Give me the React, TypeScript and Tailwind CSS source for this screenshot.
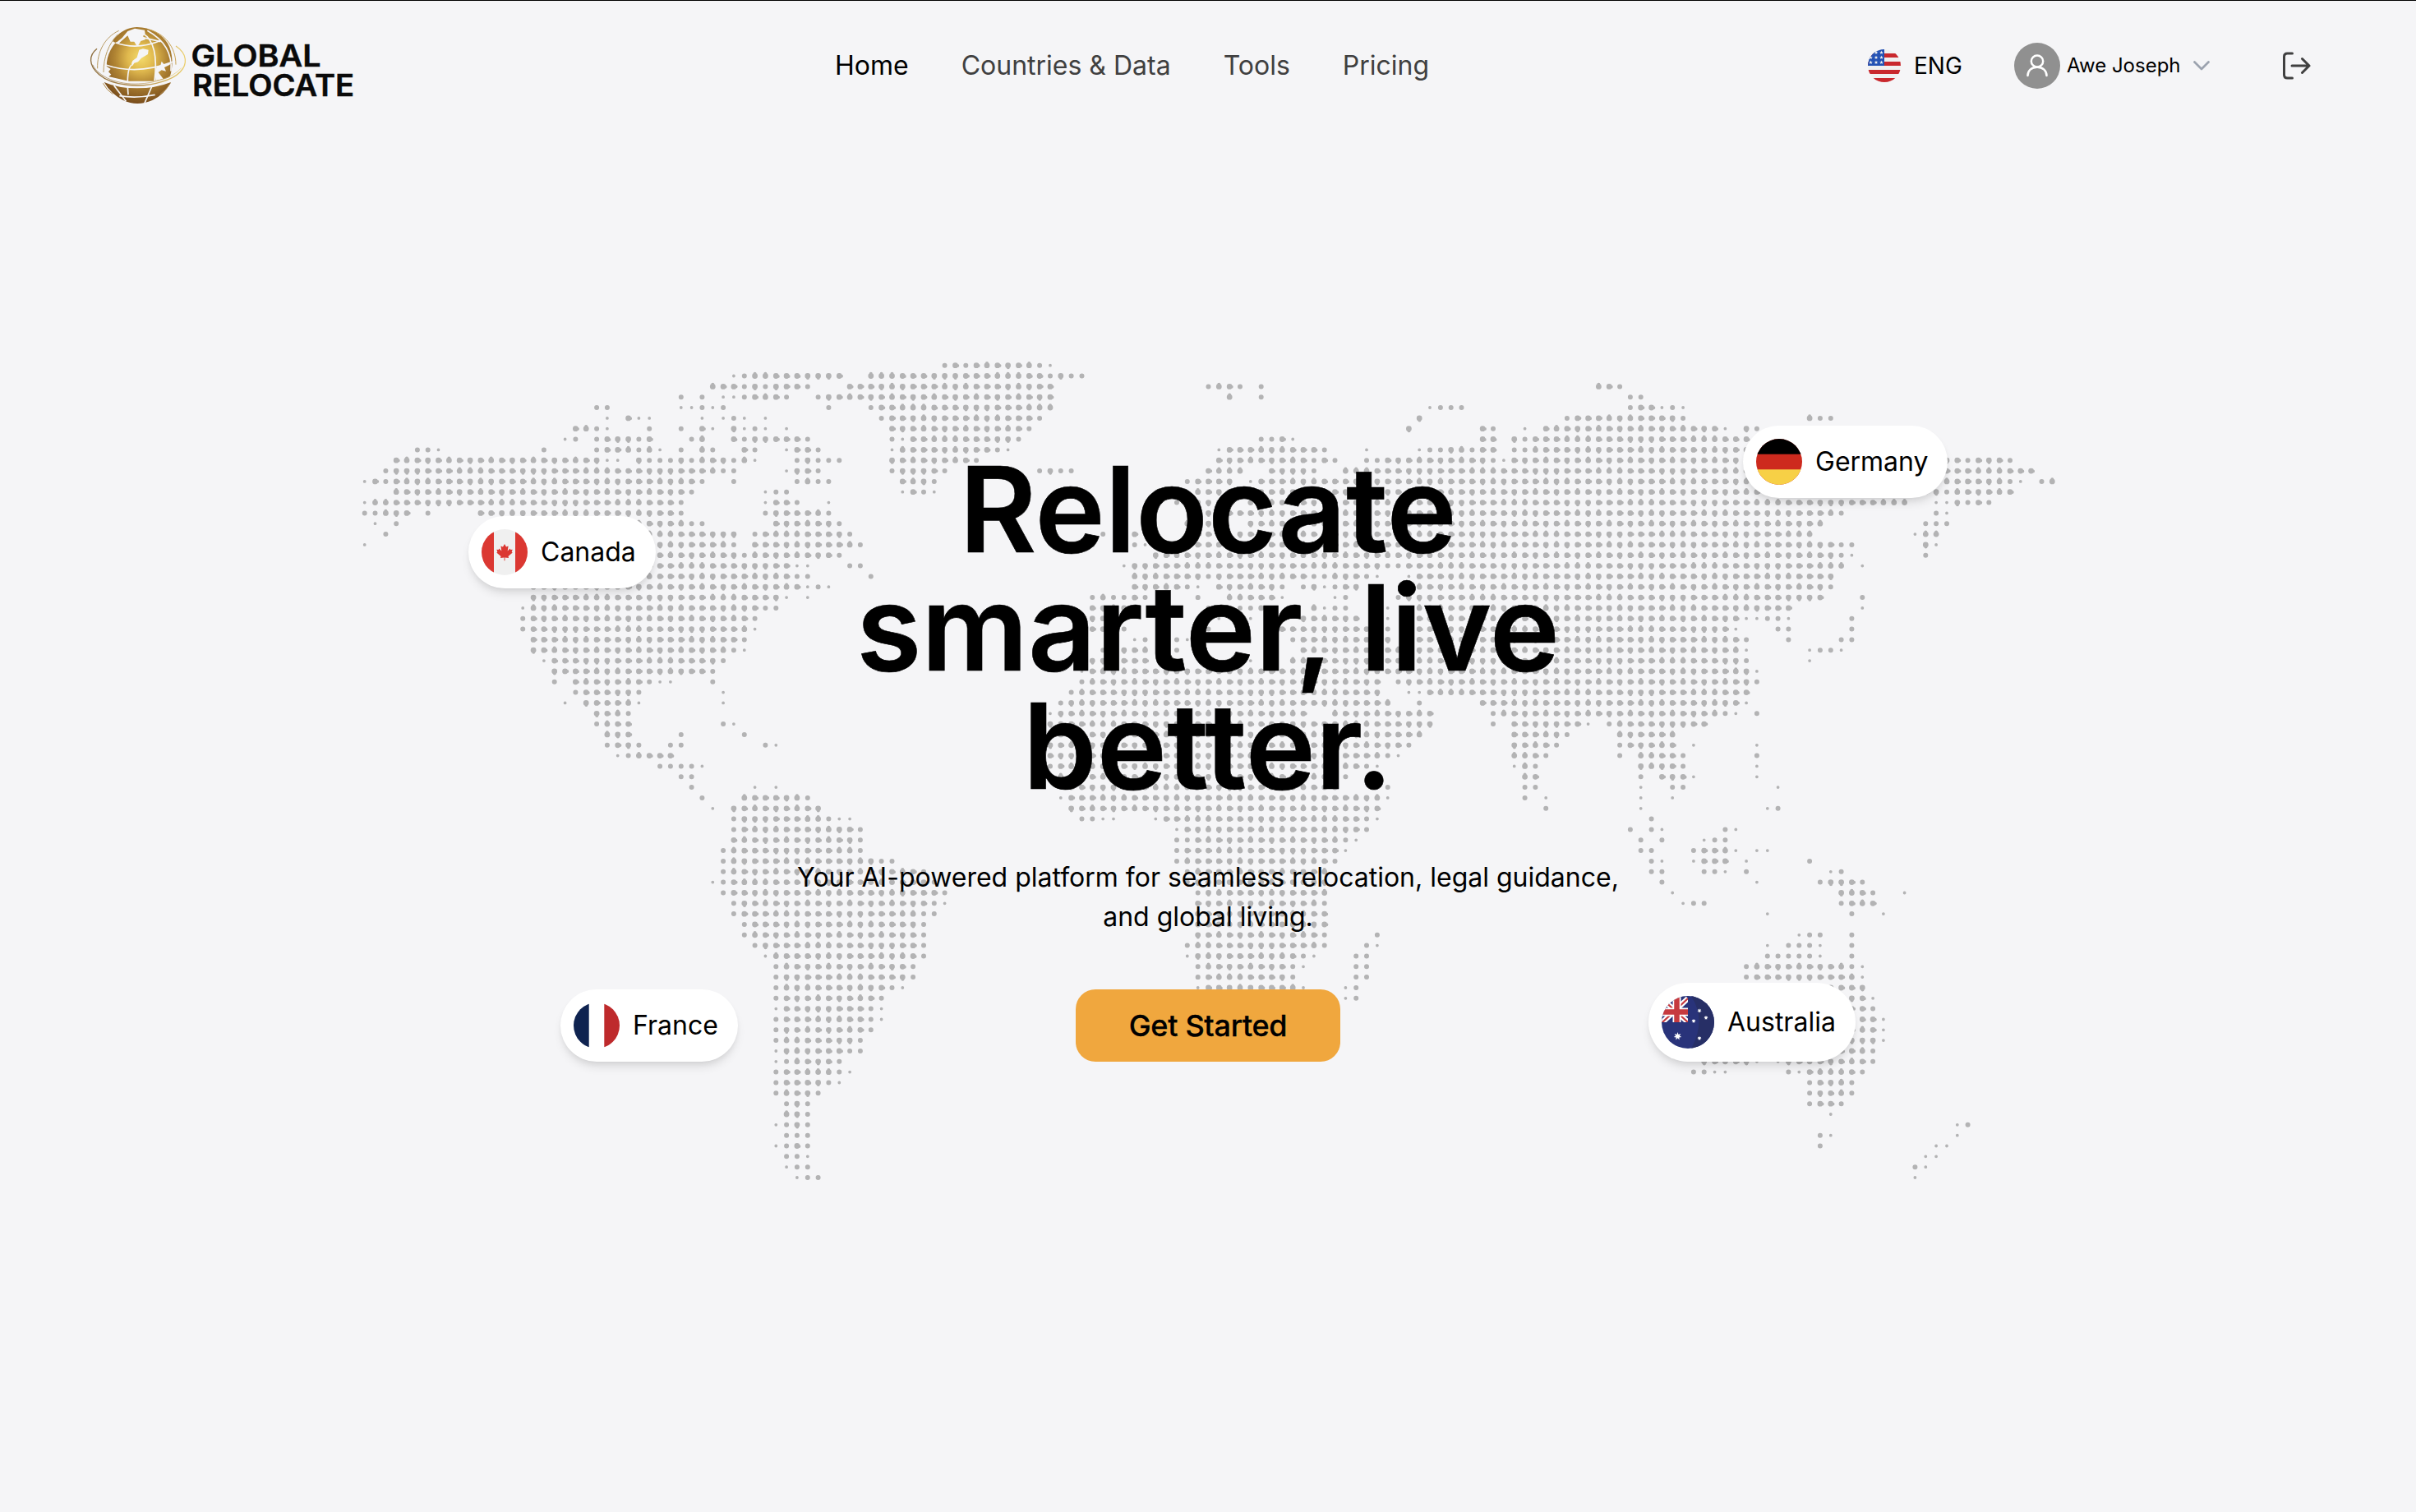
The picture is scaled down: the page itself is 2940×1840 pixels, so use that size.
import React from "react";

const PITCH = 12.835;

/*
 * One string per row of the dotted world map. Tokens are column numbers or
 * column ranges; the suffix "s" marks a small dot and "t" a tiny one.
 */
const ROWS: string[] = [
  "55s 56 57s 58-63 64s 65t",
  "35t 36s 37-45 48-64 65s 66 67s 68s",
  "33-35 36s 37 38s 39-41 42s 46-65 80s 81 82 83s 85s 117 118 119s",
  "30s 32s 34t 35t 36s 37-39 40s 43s 44-65 82 85s 120s 121s",
  "22s 23s 30t 31t 32s 33t 34s 44s 48s 49-65 101t 102s 103s 104s 120s 121 122 123t 124s 125t",
  "23t 25 26t 27t 32t 34t 35s 36t 38t 49s 50-63 64s 100 114s 115-124 125s 137 138s 139s",
  "20 21 22s 23t 27s 30s 32 33t 35 36t 37s 38t 40t 50-62 63s 99 106 107s 110t 112-128 129t 131 132s",
  "19t 20s 22s 23-25 26s 27 31s 32 35 36s 37-41 42s 50s 51t 52-61 62s 85s 86s 87 88t 106 107 109 110s 111-131",
  "5s 6s 7t 17s 22s 23-25 26s 27 28t 30s 32 33s 36 37s 40t 41 42 43s 50t 51-59 60s 61t 81t 82-90 91s 95t 100t 101s 102s 103 104 105s 106 107 109s 110s 111-131",
  "3-22 23t 24t 26 27s 28s 29s 30 31s 32-34 35s 36 37t 41s 42 43s 44s 45s 50-57 58s 81-89 90s 91 92s 95s 96s 97-106 107s 108t 109-131 150 151 152s 153-155 156s",
  "2s 3-33 34s 35s 40t 41 42 43s 50s 51-54 55s 64s 65 66s 67s 80-83 86-89 90s 93-131 150-158",
  "0t 1 2s 3-31 32s 35s 41s 42 43s 44s 51-53 54s 78s 79-82 84t 85-131 150-155 156s 157t 159s 160",
  "3-30 31s 38t 39s 40s 51t 52 53s 54t 79-82 84-149 150s 151-156",
  "0t 1-29 30s 38t 39 40 41s 44t 77s 79-82 84-146 149t 150t 151 152s 153 154s",
  "0s 1s 2-4 6s 11-29 30s 38s 39-43 44s 80-139 140s 149s 150t",
  "1t 3s 12-30 31s 32s 39-44 45s 78-80 84-138 148s 149s 150s",
  "2s 12-35 37s 38-45 46s 70s 73 79-80 83-137 147t 148 149",
  "0t 13-34 35s 37-46 47s 69s 73s 74t 79-139 140s 141s 148 149t",
  "14-35 36s 37-44 45s 75-139 140s 141t 148s",
  "14-40 41t 42t 46s 47s 72t 73-96 97s 98s 99-140 142t",
  "15-40 41s 42s 48s 73-79 80s 81-89 90s 91s 92-94 95s 96t 99t 100-139",
  "16-41 42t 43s 44t 73-77 78s 79t 81-86 87s 89s 90 91t 92s 93-94 100-138 139s",
  "16-39 40t 42t 69s 70 71s 72s 73 74s 79s 82-86 87t 92t 93s 98s 99-138 142s",
  "15t 16-37 38s 39s 69-73 80s 83s 84s 85 90 91t 92s 93s 97t 100-135 142t",
  "15s 16-36 37s 69-72 81t 84t 89 90-94 97t 100-130 131t 132t 133s 134s 135t 141s",
  "15s 16-36 37t 69 70-71 72s 80s 87-95 97s 100-129 130t 134s 135s 141s",
  "16-35 36s 73t 74s 77s 78t 88s 89-96 97 99-130 131s 135s 140s 141s",
  "16-34 35s 36t 70s 71-74 77s 89-96 97-130 131t 137t 138s 139s 140t",
  "17t 18-33 34s 69-74 84t 88-130 131s 137t",
  "18-32 33s 68t 69-131 132t",
  "18s 20-26 27s 28t 29t 33s 68s 69-96 98s 99-131 132s",
  "20s 21-25 26s 34t 67s 68-96 99t 100t 101-131",
  "19t 21-25 26t 34t 66s 67-97 100s 106-130 131t",
  "22-24 25s 65t 66-89 92-101 107s 108-128 129s 130t 132s",
  "22s 23-25 34s 35t 65-90 91-101 107s 109-115 116t 118s 119-127",
  "23-25 30s 36s 65-92 93-100 109-113 114s 119-124",
  "23s 24-25 26s 29s 30s 38s 39t 65-92 93-98 99s 109-112 113s 119s 120-124 126t 132t",
  "24t 25s 26-29 65-96 97s 98t 109-111 112s 119s 121-124 125s 132s",
  "28s 29s 30s 31s 32t 65s 66-94 95s 96t 109t 110 111s 121-124 125s 132t",
  "30s 31s 66-92 93s 110 111 121s 123-125 126t 132t",
  "31s 37t 39t 67-92 97s 110s 111s 121t 124s 125s 134t",
  "32s 36-41 42s 66t 67-96 97t 110s 112t 121t 124t",
  "33t 35-43 67-95 96 112s 121t 133t 134s",
  "35s 36-43 44s 45t 46t 68s 69s 70t 71t 75t 76-94 95s 96t 122s",
  "35s 36-46 47s 77t 78-94 95s 120s 122s 123t 129s 130t",
  "35-46 47s 77s 78s 79-92 93s 94t 121s 123s 127t 128s 129s",
  "34s 35-46 47s 77s 78-92 93t 121s 122s 126s 127-129 130t 132t 133t",
  "34s 35-48 49s 50s 77s 78-91 92s 122s 123t 126t 127-129 131t 137s",
  "34s 35-52 53s 78s 79-91 122s 123s 127s 128s 129t 131s 139t 140s",
  "33t 34s 35-53 54s 78s 79-91 123s 132t 138s 139-141 142s",
  "34s 35-54 55s 79s 80-91 124t 140-142 143s 146t",
  "35s 36-53 54s 55t 79-90 91s 125t 126s 127s 140s 141-143",
  "35s 36-52 53s 54s 79-91 133t 141s 144t",
  "36s 37-52 53s 79-91",
  "36s 37-52 53s 79-90 91s 96s 136t 137s 138s 141s",
  "37s 38-52 53s 78s 79-90 91s 95s 96t 133t 135s 136s 137s 138t 141s",
  "38t 39-52 53s 78t 79-88 89s 90t 94s 95s 133s 134s 135s 136s 137s 138t 141s",
  "39s 40-51 52s 79s 80-87 88s 89t 94s 95s 131s 132-140 141s 142t",
  "39s 40-51 52s 79s 80-87 88s 94s 95s 131s 132-141 142t",
  "39s 40-49 50s 51t 79t 80-88 89t 93t 94s 131-142",
  "39s 40-48 49s 81-87 93t 94s 130-142 143t",
  "39t 40-47 48s 49t 129-142 143s",
  "39s 40-47 48s 49t 129-143 144t",
  "39s 40-47 48s 128-143 144t",
  "39s 40-46 47s 128-143 144t",
  "39t 40-45 46s 47s 128-142 143s",
  "39t 40s 41-44 45s 127-131 132t 134t 135-142 143s",
  "39s 40-44 45s 46t 126s 127s 128t 129t 135s 136t 137-141 142s",
  "39s 40-43 44s 45t 137s 138-140 141s",
  "39s 40-42 43s 137s 138-140 141s",
  "40s 41 42s 137s 138-139 140s",
  "40 41 42s 139t",
  "39t 40s 41 42s 151t 152s",
  "40s 41s 42s 138s 139t 151t",
  "39t 40s 41 42s 138s 149t 150t",
  "40s 41s 42t 148t 149t",
  "40t 41s 42s 147s 148t",
  "41t 42s 43s 147t",
];

const circle = (cx: number, cy: number, r: number) =>
  `M${(cx - r).toFixed(1)} ${cy.toFixed(1)}a${r} ${r} 0 1 0 ${2 * r} 0a${r} ${r} 0 1 0 ${-2 * r} 0`;

const TAILS = [
  [2.7, 0.2],
  [0, -2.7],
  [2.5, 0.4],
  [0.2, 2.6],
];

function mapPath() {
  let d = "";
  ROWS.forEach((row, r) => {
    row.split(" ").forEach((token) => {
      const kind = token.slice(-1);
      const range = token.replace(/[st]/, "").split("-").map(Number);
      const end = range[1] ?? range[0];
      for (let c = range[0]; c <= end; c++) {
        const x = 7.7 + c * PITCH;
        const y = 7.7 + r * PITCH;
        if (kind === "t") {
          d += circle(x, y, 1.9);
        } else if (kind === "s") {
          d += circle(x, y, 3);
        } else {
          const tail = TAILS[(c * 7 + r * 5 + ((c * r) % 3)) % 4];
          d += circle(x, y, 3.4) + circle(x + tail[0], y + tail[1], 2);
        }
      }
    });
  });
  return d;
}

const MAP_D = mapPath();

function WorldMap() {
  return (
    <svg width="2072" height="1006" viewBox="0 0 2072 1006" className="shrink-0 blur-[0.6px]" aria-hidden>
      <path d={MAP_D} fill="#b3b3b4" />
    </svg>
  );
}

function Logo() {
  return (
    <svg width="340" height="120" viewBox="0 0 340 120" role="img" aria-label="Global Relocate">
      <defs>
        <radialGradient id="gold" gradientUnits="userSpaceOnUse" cx="215" cy="150" r="175">
          <stop offset="0" stopColor="#f4dc6c" />
          <stop offset="0.28" stopColor="#e0b94e" />
          <stop offset="0.55" stopColor="#b08433" />
          <stop offset="1" stopColor="#74481a" />
        </radialGradient>
        <linearGradient id="ring" x1="0" x2="1" y1="0" y2="0">
          <stop offset="0" stopColor="#8a6a3a" />
          <stop offset="0.5" stopColor="#b08a4a" />
          <stop offset="1" stopColor="#ecd070" />
        </linearGradient>
      </defs>
      <g transform="scale(0.33333)" fill="none">
        <path d="M128 70C150 48 175 40 200 39C250 39 292 66 312 98C332 130 334 190 318 225L262 236L170 236L92 218C84 170 92 130 122 96C106 92 112 84 128 70Z" fill="url(#gold)" />
        <path d="M80 240Q130 262 200 262Q270 262 324 240Q300 286 256 306Q200 330 150 306Q104 282 80 240Z" fill="url(#gold)" />
        <g fill="#f5f5f7">
          <path d="M166 54L192 44L228 50L230 64L222 72L232 84L214 90L206 104L198 106L190 92L176 92L166 70L150 84L134 98L124 96L146 78Z" />
          <path d="M208 122L222 118L242 122L240 138L216 152L204 166L190 170L184 180L180 172L184 162L200 150Z" />
          <path d="M86 180L104 192L96 202L106 212L94 222L84 214Z" />
          <path d="M272 182L286 178L290 164L300 176L322 168L320 176L300 186L306 200L290 196L278 204L296 228L268 234L266 206Z" />
        </g>
        <g stroke="#f5f5f7" strokeWidth="5">
          <path d="M122 96Q200 124 288 88" />
          <path d="M84 176Q200 216 330 166" />
          <path d="M182 176Q160 190 168 286" />
          <path d="M222 62C262 86 276 140 264 236" />
          <path d="M238 52C296 84 330 130 324 200" />
          <path d="M200 72L286 92" />
          <path d="M136 290Q200 300 266 286" />
          <path d="M256 252L228 316" />
          <path d="M116 252L160 310" />
        </g>
        <path d="M56 190C54 130 82 76 134 52M78 204C78 150 96 100 130 66" stroke="#b79a62" strokeWidth="3" />
        <path d="M246 48C300 64 342 110 342 176" stroke="#c9a252" strokeWidth="3" />
        <path d="M54 118C24 142 22 178 62 212C108 252 210 264 292 238C352 220 380 188 376 156C374 136 360 120 342 108" stroke="#f5f5f7" strokeWidth="13" />
        <path d="M54 118C24 142 22 178 62 212C108 252 210 264 292 238C352 220 380 188 376 156C374 136 360 120 342 108" stroke="url(#ring)" strokeWidth="4" />
        <path d="M38 176C60 222 132 250 206 246C260 244 330 226 362 188" stroke="url(#ring)" strokeWidth="2" />
        <path d="M76 244Q88 268 112 284M322 244Q306 270 284 284" stroke="#b08a4a" strokeWidth="3" />
      </g>
      <g fontFamily="Inter, sans-serif" fontWeight="600" fontSize="37" fill="#0a0a0a" stroke="#0a0a0a" strokeWidth="0.5">
        <text x="132.5" y="61.3" textLength="158" lengthAdjust="spacingAndGlyphs">GLOBAL</text>
        <text x="134" y="96.900" textLength="197" lengthAdjust="spacingAndGlyphs">RELOCATE</text>
      </g>
    </svg>
  );
}

const STAR = "M0 -1L.24 -.32L.95 -.31L.38 .12L.59 .81L0 .4L-.59 .81L-.38 .12L-.95 -.31L-.24 -.32Z";

function UsFlag() {
  const stars = [
    [10, 5], [16.5, 5], [3.5, 11], [10, 11], [16.5, 11], [3.5, 17], [10, 17], [16.5, 17],
  ];
  return (
    <svg width="40" height="40" viewBox="0 0 40 40">
      <clipPath id="us"><circle cx="20" cy="20" r="20" /></clipPath>
      <g clipPath="url(#us)">
        <rect width="40" height="40" fill="#f0f0f0" />
        <path d="M0 5h40v5H0zM0 15h40v5H0zM0 25h40v5H0zM0 35h40v5H0z" fill="#c9282d" />
        <rect width="20" height="20" fill="#2452b4" />
        {stars.map(([x, y], i) => (
          <path key={i} d={STAR} transform={`translate(${x} ${y - 1}) scale(2.5)`} fill="#f0f0f0" />
        ))}
      </g>
    </svg>
  );
}

function CanadaFlag() {
  return (
    <svg width="56" height="56" viewBox="0 0 56 56">
      <clipPath id="ca"><circle cx="28" cy="28" r="28" /></clipPath>
      <g clipPath="url(#ca)">
        <rect width="56" height="56" fill="#f0f0f0" />
        <path d="M0 0h15v56H0zM41 0h15v56H41z" fill="#db3832" />
        <path d="M28 18l2 3.6 2.6-1.2-.9 6 3-3 .6 1.7 2.4-.4-1 3 1 .9-5.2 4.4.5 2-4.6-.6.1 3.8h-1l.1-3.8-4.6.6.5-2-5.2-4.4 1-.9-1-3 2.4.4.6-1.7 3 3-.9-6 2.6 1.2z" fill="#db3832" />
      </g>
    </svg>
  );
}

function GermanyFlag() {
  return (
    <svg width="56" height="56" viewBox="0 0 56 56">
      <clipPath id="de"><circle cx="28" cy="28" r="28" /></clipPath>
      <g clipPath="url(#de)">
        <rect width="56" height="56" fill="#cd2a1e" />
        <rect width="56" height="18.7" fill="#000" />
        <rect y="37.3" width="56" height="18.7" fill="#f7d046" />
      </g>
    </svg>
  );
}

function FranceFlag() {
  return (
    <svg width="56" height="56" viewBox="0 0 56 56">
      <clipPath id="fr"><circle cx="28" cy="28" r="28" /></clipPath>
      <g clipPath="url(#fr)">
        <rect width="56" height="56" fill="#fff" />
        <rect width="18.7" height="56" fill="#0f2350" />
        <rect x="37.3" width="18.7" height="56" fill="#be2a2c" />
      </g>
    </svg>
  );
}

const STAR7 =
  "M0 -1L.2 -.42L.78 -.62L.46 -.1L.97 .22L.37 .3L.43 .9L0 .47L-.43 .9L-.37 .3L-.97 .22L-.46 -.1L-.78 -.62L-.2 -.42Z";

function AustraliaFlag() {
  const stars: [number, number, number][] = [
    [19.5, 49, 5], [46, 18, 2.8], [54, 26.5, 2.8], [39, 30.5, 2.8], [46, 51.5, 2.8],
  ];
  return (
    <svg width="64" height="64" viewBox="0 0 64 64">
      <clipPath id="au"><circle cx="32" cy="32" r="32" /></clipPath>
      <clipPath id="jack"><rect width="32" height="32" /></clipPath>
      <g clipPath="url(#au)">
        <rect width="64" height="64" fill="#29337a" />
        <path d="M36 0Q46 16 45.5 32T36 64H64V0z" fill="#272f66" />
        <g clipPath="url(#jack)">
          <path d="M1 4L32 32M32 3L1 32" stroke="#fff" strokeWidth="6.5" />
          <path d="M1 4L32 32M32 3L1 32" stroke="#c63a3f" strokeWidth="2.2" />
          <path d="M18.5 0V32M0 19.5H32" stroke="#fff" strokeWidth="10" />
          <path d="M18.5 0V32M0 19.5H32" stroke="#c63a3f" strokeWidth="6.5" />
        </g>
        {stars.map(([x, y, r], i) => (
          <path key={i} d={STAR7} transform={`translate(${x} ${y}) scale(${r})`} fill="#fff" />
        ))}
      </g>
    </svg>
  );
}

function Pin({ flag, name, place }: { flag: React.ReactNode; name: string; place: string }) {
  return (
    <div
      className={`absolute flex items-center gap-4 rounded-full bg-white p-4 text-[32px] leading-[48px] text-black shadow-[0_8px_12px_-2px_rgba(0,0,0,0.1),0_4px_8px_-4px_rgba(0,0,0,0.1)] ${place}`}
    >
      {flag}
      <span>{name}</span>
    </div>
  );
}

function Header() {
  return (
    <header className="flex h-[159px] items-start">
      <div className="ml-[100px] w-[916px] pt-[19px]">
        <Logo />
      </div>
      <nav className="flex gap-16 pt-[55px] text-[32px] leading-[48px] text-[#404040]">
        <a className="text-black">Home</a>
        <a>Countries &amp; Data</a>
        <a>Tools</a>
        <a>Pricing</a>
      </nav>
      <div className="mr-[128px] ml-auto flex items-center pt-[51px]">
        <UsFlag />
        <span className="ml-4 w-[122px] text-[28px] leading-10 text-black">ENG</span>
        <svg width="56" height="56" viewBox="0 0 56 56" fill="none">
          <circle cx="28" cy="28" r="28" fill="#909090" />
          <g stroke="#fff" strokeWidth="2.5" strokeLinecap="round">
            <ellipse cx="28" cy="22.5" rx="7.2" ry="7" />
            <path d="M16.500 40C16.500 34 21 29.700 28 29.700S39.500 34 39.500 40" />
          </g>
        </svg>
        <span className="ml-2 w-[138px] text-[24px] leading-8 whitespace-nowrap text-black">Awe Joseph</span>
        <svg className="ml-4" width="20" height="12" viewBox="0 0 20 12" fill="none">
          <path d="M1.500 1.500L10 10L18.500 1.500" stroke="#9ca3af" strokeWidth="2.7" strokeLinecap="round" strokeLinejoin="round" />
        </svg>
        <svg className="ml-[87px]" width="36" height="36" viewBox="0 0 36 36" fill="none" stroke="#404040" strokeWidth="3" strokeLinecap="round" strokeLinejoin="round">
          <path d="M13.500 3H7.500Q3.500 3 3.500 7V29Q3.500 33 7.500 33H13.500" />
          <path d="M13 18H34M25.500 9.500L34 18L25.500 26.500" />
        </svg>
      </div>
    </header>
  );
}

export default function App() {
  return (
    <div className="relative h-[1840px] w-[2940px] overflow-hidden border-t border-black bg-[#f5f5f7] font-['Inter',sans-serif]">
      <Header />
      <main className="relative grid">
        <div className="pt-[277px] pl-[435.7px] [grid-area:1/1]">
          <WorldMap />
        </div>
        <section className="relative flex flex-col items-center pt-[388px] text-center text-black [grid-area:1/1]">
          <h1 className="w-[1000px] text-[144px] leading-[144px] font-semibold [-webkit-text-stroke:0.6px_black]">
            Relocate smarter, live better.
          </h1>
          <p className="mt-[64px] w-[1040px] text-[32px] leading-[48px]">
            Your AI-powered platform for seamless relocation, legal guidance, and global living.
          </p>
          <button className="mt-[64px] h-[88px] w-[322px] rounded-[24px] bg-[#f0a73e] text-[36px] leading-[56px] font-medium tracking-[-0.3px] [-webkit-text-stroke:0.3px_black]">
            Get Started
          </button>
        </section>
        <Pin place="top-[468px] left-[570px] w-[228px]" flag={<CanadaFlag />} name="Canada" />
        <Pin place="top-[358px] left-[2121px] w-[249px]" flag={<GermanyFlag />} name="Germany" />
        <Pin place="top-[1044px] left-[682px] w-[216px]" flag={<FranceFlag />} name="France" />
        <Pin place="top-[1036px] left-[2006px] w-[252px]" flag={<AustraliaFlag />} name="Australia" />
      </main>
    </div>
  );
}
